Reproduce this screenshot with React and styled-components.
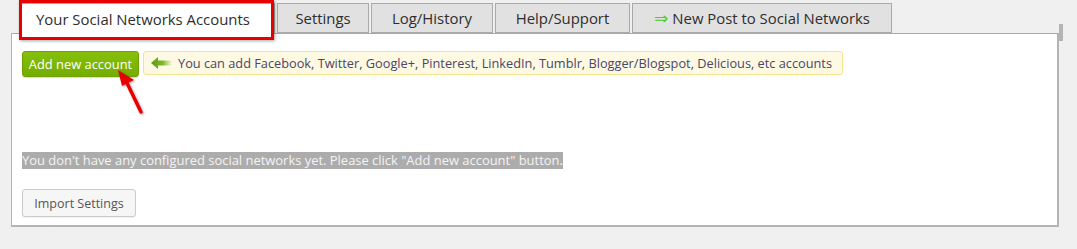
import React from "react";
import styled, { createGlobalStyle } from "styled-components";

const Global = createGlobalStyle`
  html, body { margin: 0; padding: 0; background: #f0f0f0; }
  body { font-family: "Open Sans", "Liberation Sans", sans-serif; }
`;

const Page = styled.div`
  position: relative;
  width: 1077px;
  height: 249px;
  background: #f0f0f0;
  padding-top: 3px;
  box-sizing: border-box;
`;

const TabBar = styled.div`
  display: flex;
  gap: 2px;
  padding-left: 21px;
  position: relative;
  z-index: 2;
`;

const Tab = styled.div`
  box-sizing: border-box;
  height: ${(p) => (p.$active ? "31px" : "30px")};
  width: ${(p) => p.$w}px;
  display: flex;
  align-items: center;
  justify-content: ${(p) => (p.$active ? "flex-start" : "center")};
  padding-left: ${(p) => (p.$active ? "14px" : "0")};
  border: 1px solid #a9a9a9;
  border-bottom: ${(p) => (p.$active ? "none" : "1px solid #a9a9a9")};
  background: ${(p) => (p.$active ? "#ffffff" : "#e1e1e1")};
  color: #2e2e2e;
  font-size: 14.9px;
  white-space: nowrap;
  gap: 4px;
`;

const GreenArrow = styled.span`
  color: #4ccf18;
  font-size: 17px;
  line-height: 1;
  font-family: "DejaVu Sans", sans-serif;
`;

const Panel = styled.div`
  position: relative;
  margin-left: 11px;
  width: 1048px;
  height: 194px;
  box-sizing: border-box;
  background: #ffffff;
  border-top: 1px solid #a9a9a9;
  border-left: 1px solid #b4b4b4;
  border-right: 2px solid #b4b4b4;
  border-bottom: 2px solid #b4b4b4;
  margin-top: -1px;
  padding: 17px 10px 0 10px;
`;

const ScrollNub = styled.div`
  position: absolute;
  right: -6px;
  top: -10px;
  width: 4px;
  height: 17px;
  background: #b4b4b4;
`;

const ActionRow = styled.div`
  display: flex;
  align-items: flex-start;
  gap: 4px;
`;

const GreenButton = styled.button`
  height: 26px;
  width: 117px;
  padding: 0;
  border: 1px solid #6da000;
  border-radius: 3px;
  background: linear-gradient(#86c00b, #74ad00);
  color: #ffffff;
  font-family: "Open Sans", "Liberation Sans", sans-serif;
  font-size: 12.9px;
  white-space: nowrap;
  cursor: pointer;
  box-shadow: 0 1px 1px rgba(0, 0, 0, 0.15);
`;

const Hint = styled.div`
  height: 24px;
  box-sizing: border-box;
  display: flex;
  align-items: center;
  gap: 6px;
  padding: 0 8px 0 7px;
  background: #fdf9e3;
  border: 1px solid #f4e48e;
  border-radius: 3px;
  color: #4b4566;
  font-size: 12.75px;
  white-space: nowrap;
  width: 700px;
`;

const Message = styled.div`
  display: inline-block;
  margin-top: 75px;
  background: #acacac;
  color: #f4f4f4;
  font-size: 12.95px;
  line-height: 17px;
  white-space: nowrap;
`;

const ImportButton = styled.button`
  display: block;
  margin-top: 19px;
  height: 28px;
  width: 114px;
  border: 1px solid #cbcbcb;
  border-radius: 3px;
  background: #f6f6f6;
  color: #555555;
  font-family: "Open Sans", "Liberation Sans", sans-serif;
  font-size: 12.5px;
  box-shadow: 0 1px 1px rgba(0, 0, 0, 0.06);
`;

const Highlight = styled.div`
  position: absolute;
  left: 19px;
  top: 0px;
  width: 255px;
  height: 40px;
  box-sizing: border-box;
  border: 3px solid #e80000;
  box-shadow: 1px 1px 3px rgba(0, 0, 0, 0.35);
  z-index: 3;
  pointer-events: none;
`;

const ArrowLayer = styled.svg`
  position: absolute;
  left: 110px;
  top: 66px;
  z-index: 3;
  overflow: visible;
`;

const LeftArrowIcon = () => (
  <svg width="21" height="12" viewBox="0 0 21 12">
    <defs>
      <linearGradient id="ga" x1="0" x2="1" y1="0" y2="0">
        <stop offset="0" stopColor="#5e9a10" />
        <stop offset="0.55" stopColor="#7cb82a" />
        <stop offset="1" stopColor="#fdf9e3" />
      </linearGradient>
    </defs>
    <path d="M0 6 L7 0 L7 3.5 L21 3.5 L21 8.5 L7 8.5 L7 12 Z" fill="url(#ga)" />
  </svg>
);

const tabs = [
  { label: "Your Social Networks Accounts", w: 254, active: true },
  { label: "Settings", w: 92 },
  { label: "Log/History", w: 122 },
  { label: "Help/Support", w: 135 },
  { label: "New Post to Social Networks", w: 260, arrow: true },
];

export default function App() {
  return (
    <Page>
      <Global />
      <TabBar>
        {tabs.map((t) => (
          <Tab key={t.label} $active={t.active} $w={t.w}>
            {t.arrow && <GreenArrow>⇒</GreenArrow>}
            {t.label}
          </Tab>
        ))}
      </TabBar>
      <Panel>
        <ScrollNub />
        <ActionRow>
          <GreenButton>Add new account</GreenButton>
          <Hint>
            <LeftArrowIcon />
            You can add Facebook, Twitter, Google+, Pinterest, LinkedIn, Tumblr, Blogger/Blogspot, Delicious, etc accounts
          </Hint>
        </ActionRow>
        <Message>
          You don't have any configured social networks yet. Please click "Add new account" button.
        </Message>
        <ImportButton>Import Settings</ImportButton>
      </Panel>
      <Highlight />
      <ArrowLayer width="40" height="50" viewBox="0 0 40 50">
        <defs>
          <filter id="sh" x="-50%" y="-50%" width="200%" height="200%">
            <feDropShadow dx="1" dy="1" stdDeviation="1" floodColor="#000" floodOpacity="0.35" />
          </filter>
        </defs>
        <g filter="url(#sh)">
          <line x1="31" y1="46" x2="17" y2="17" stroke="#e80000" strokeWidth="3.5" strokeLinecap="round" />
          <path d="M8 4 L24 14 L12 20 Z" fill="#e80000" />
        </g>
      </ArrowLayer>
    </Page>
  );
}
